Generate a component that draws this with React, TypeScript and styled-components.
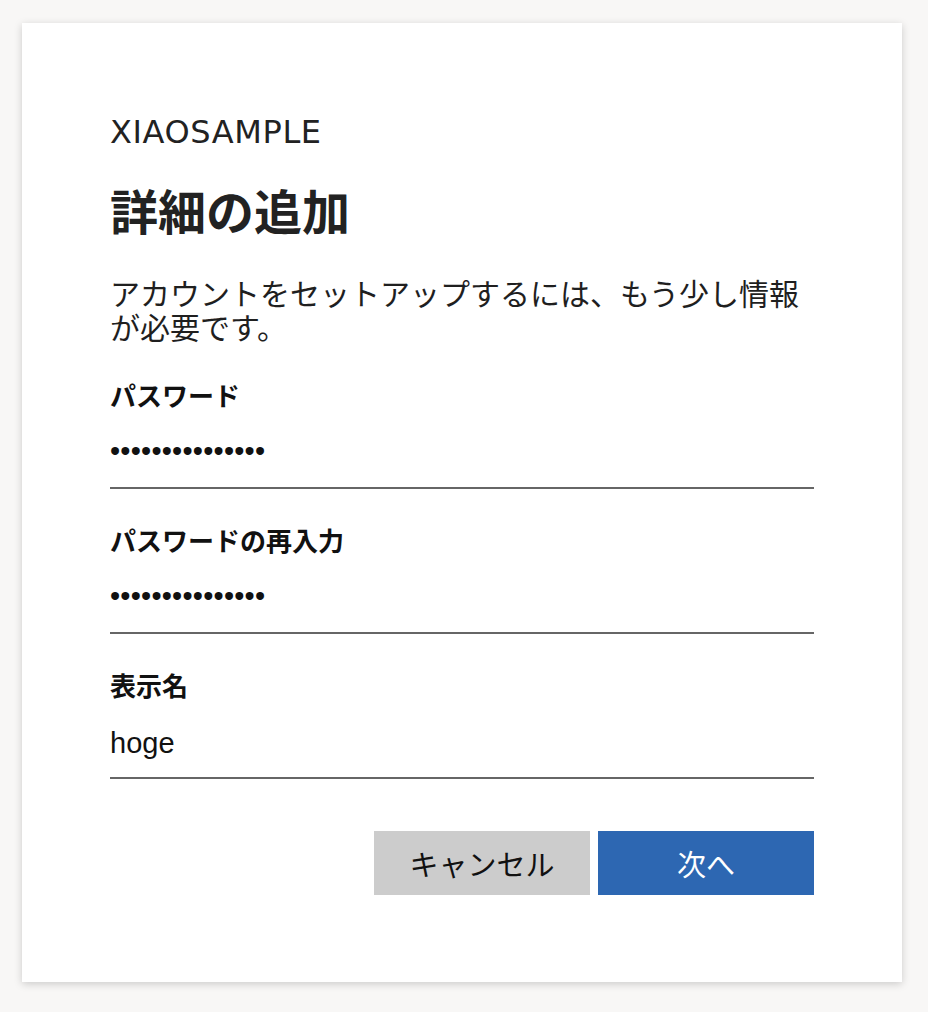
import React from "react";
import styled, { createGlobalStyle } from "styled-components";

const GlobalStyle = createGlobalStyle`
  html, body {
    margin: 0;
    padding: 0;
    background: #f8f7f6;
  }
  body {
    font-family: "Noto Sans CJK JP", "Liberation Sans", sans-serif;
    color: #1f1f1f;
  }
`;

const Page = styled.div`
  padding: 23px 26px 30px 22px;
`;

const Card = styled.main`
  width: 880px;
  box-sizing: border-box;
  background: #ffffff;
  box-shadow: 0 2px 8px rgba(0, 0, 0, 0.18);
  padding: 89px 88px 87px;
  display: flex;
  flex-direction: column;
`;

const Brand = styled.div`
  font-family: "DejaVu Sans", "Liberation Sans", sans-serif;
  font-size: 32px;
  line-height: 40px;
  color: #222;
  letter-spacing: 0.6px;
`;

const Title = styled.h1`
  margin: 29px 0 0;
  font-family: "Noto Sans CJK JP", sans-serif;
  font-weight: 700;
  font-size: 48px;
  line-height: 56px;
  color: #222;
`;

const Intro = styled.p`
  margin: 38px 0 0;
  font-size: 30px;
  line-height: 34px;
  color: #1f1f1f;
`;

const Fields = styled.div`
  margin-top: 36px;
  display: flex;
  flex-direction: column;
  gap: 35px;
`;

const Field = styled.label`
  display: flex;
  flex-direction: column;
`;

const LabelText = styled.span`
  font-family: "Noto Sans CJK JP", sans-serif;
  font-weight: 700;
  font-size: 26px;
  line-height: 32px;
  color: #111;
`;

const TextInput = styled.input<{ $secret?: boolean }>`
  box-sizing: border-box;
  height: 78px;
  width: 100%;
  margin: 0;
  padding: ${(p) => (p.$secret ? "4px 0 0" : "8px 0 0")};
  border: none;
  border-bottom: 2px solid #666;
  outline: none;
  background: transparent;
  font-family: "Liberation Sans", Arial, sans-serif;
  font-size: 29px;
  color: #111;
  letter-spacing: ${(p) => (p.$secret ? "0.2px" : "0")};
`;

const Actions = styled.div`
  margin-top: 52px;
  display: flex;
  justify-content: flex-end;
  gap: 8px;
`;

const Button = styled.button<{ $primary?: boolean }>`
  width: 216px;
  height: 64px;
  border: none;
  margin: 0;
  padding: 0;
  font-family: "Noto Sans CJK JP", sans-serif;
  font-size: 29px;
  background: ${(p) => (p.$primary ? "#2d67b2" : "#cccccc")};
  color: ${(p) => (p.$primary ? "#ffffff" : "#111111")};
  cursor: pointer;
`;

export default function App() {
  return (
    <>
      <GlobalStyle />
      <Page>
        <Card>
          <Brand>XIAOSAMPLE</Brand>
          <Title>詳細の追加</Title>
          <Intro>アカウントをセットアップするには、もう少し情報が必要です。</Intro>
          <Fields>
            <Field>
              <LabelText>パスワード</LabelText>
              <TextInput type="password" $secret defaultValue="abcdefghijklmno" readOnly />
            </Field>
            <Field>
              <LabelText>パスワードの再入力</LabelText>
              <TextInput type="password" $secret defaultValue="abcdefghijklmno" readOnly />
            </Field>
            <Field>
              <LabelText>表示名</LabelText>
              <TextInput type="text" defaultValue="hoge" readOnly />
            </Field>
          </Fields>
          <Actions>
            <Button type="button">キャンセル</Button>
            <Button type="button" $primary>
              次へ
            </Button>
          </Actions>
        </Card>
      </Page>
    </>
  );
}
